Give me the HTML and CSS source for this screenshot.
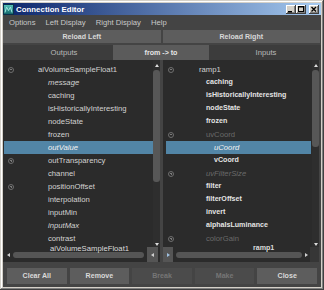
FILE: index.html
```html
<!DOCTYPE html>
<html>
<head>
<meta charset="utf-8">
<link rel="stylesheet" href="styles.css">
</head>
<body>
<div class="win">
  <div class="titlebar">
    <svg class="appicon" width="11" height="11" viewBox="0 0 11 11">
      <defs>
        <linearGradient id="ig" x1="0" y1="0" x2="0" y2="1">
          <stop offset="0" stop-color="#5cc7bd"/>
          <stop offset="1" stop-color="#0f6166"/>
        </linearGradient>
      </defs>
      <rect x="0.5" y="0.5" width="10" height="10" fill="url(#ig)" stroke="#0b2f4a"/>
      <path d="M2 8.5 L3.5 3 L5.5 6.5 L7.5 3 L9 8.5" fill="none" stroke="#9fe6df" stroke-width="1"/>
    </svg>
    <span class="title">Connection Editor</span>
    <div class="wbtns">
      <span class="wb"><svg width="10" height="9" viewBox="0 0 10 9"><rect x="2" y="6" width="4" height="1.5" fill="#000"/></svg></span>
      <span class="wb"><svg width="10" height="9" viewBox="0 0 10 9"><rect x="2.5" y="1.5" width="5" height="5" fill="none" stroke="#000"/><rect x="2" y="1" width="6" height="1.5" fill="#000"/></svg></span>
      <span class="wb wclose"><svg width="10" height="9" viewBox="0 0 10 9"><path d="M2.5 2 L7 6.5 M7 2 L2.5 6.5" stroke="#000" stroke-width="1.3"/></svg></span>
    </div>
  </div>
  <div class="content">
    <div class="menubar">
      <span>Options</span><span>Left Display</span><span>Right Display</span><span>Help</span>
    </div>
    <div class="reloads">
      <div class="rbtn">Reload Left</div>
      <div class="rbtn">Reload Right</div>
    </div>
    <div class="tabs">
      <div class="tab outs">Outputs</div>
      <div class="tab mid">from -&gt; to</div>
      <div class="tab ins">Inputs</div>
    </div>
    <div class="panels">
      <div class="panel left">
        <div class="tree">
          <ul class="rows">
            <li class="row"><i class="tog minus"></i><span class="lab l0">aiVolumeSampleFloat1</span></li>
            <li class="row"><i class="tog"></i><span class="lab l1 it">message</span></li>
            <li class="row"><i class="tog"></i><span class="lab l1">caching</span></li>
            <li class="row"><i class="tog"></i><span class="lab l1">isHistoricallyInteresting</span></li>
            <li class="row"><i class="tog"></i><span class="lab l1">nodeState</span></li>
            <li class="row"><i class="tog"></i><span class="lab l1">frozen</span></li>
            <li class="row sel"><i class="tog"></i><span class="lab l1 it">outValue</span></li>
            <li class="row"><i class="tog plus"></i><span class="lab l1">outTransparency</span></li>
            <li class="row"><i class="tog"></i><span class="lab l1">channel</span></li>
            <li class="row"><i class="tog plus"></i><span class="lab l1">positionOffset</span></li>
            <li class="row"><i class="tog"></i><span class="lab l1">interpolation</span></li>
            <li class="row"><i class="tog"></i><span class="lab l1">inputMin</span></li>
            <li class="row"><i class="tog"></i><span class="lab l1 it">inputMax</span></li>
            <li class="row"><i class="tog"></i><span class="lab l1">contrast</span></li>
          </ul>
          <div class="vscroll">
            <i class="up"></i>
            <div class="thumb" style="height:112px"></div>
            <div class="spacer"></div>
            <i class="down"></i>
          </div>
        </div>
        <div class="hbar">
          <i class="arr-l"></i>
          <div class="hthumb"></div>
          <div class="hbox"><i class="arr-l"></i></div>
        </div>
        <span class="nodelabel">aiVolumeSampleFloat1</span>
      </div>
      <div class="panel right">
        <div class="tree">
          <ul class="rows">
            <li class="row"><i class="tog minus"></i><span class="lab l0">ramp1</span></li>
            <li class="row"><i class="tog"></i><span class="lab l1 b">caching</span></li>
            <li class="row"><i class="tog"></i><span class="lab l1 b">isHistoricallyInteresting</span></li>
            <li class="row"><i class="tog"></i><span class="lab l1 b">nodeState</span></li>
            <li class="row"><i class="tog"></i><span class="lab l1 b">frozen</span></li>
            <li class="row"><i class="tog minus"></i><span class="lab l1 dim">uvCoord</span></li>
            <li class="row sel"><i class="tog"></i><span class="lab l2 it">uCoord</span></li>
            <li class="row"><i class="tog"></i><span class="lab l2 b">vCoord</span></li>
            <li class="row"><i class="tog plus"></i><span class="lab l1 dim it">uvFilterSize</span></li>
            <li class="row"><i class="tog"></i><span class="lab l1 b">filter</span></li>
            <li class="row"><i class="tog"></i><span class="lab l1 b">filterOffset</span></li>
            <li class="row"><i class="tog"></i><span class="lab l1 b">invert</span></li>
            <li class="row"><i class="tog"></i><span class="lab l1 b">alphaIsLuminance</span></li>
            <li class="row"><i class="tog plus"></i><span class="lab l1 dim">colorGain</span></li>
          </ul>
          <div class="vscroll">
            <i class="up"></i>
            <div class="thumb" style="height:77px"></div>
            <div class="spacer"></div>
            <i class="down"></i>
          </div>
        </div>
        <div class="hbar">
          <div class="hbox"><i class="arr-r blue"></i></div>
          <div class="hthumb"></div>
          <i class="arr-r"></i>
          <div class="corner"></div>
        </div>
        <span class="nodelabel b">ramp1</span>
      </div>
    </div>
    <div class="actions">
      <div class="abtn">Clear All</div>
      <div class="abtn">Remove</div>
      <div class="abtn off">Break</div>
      <div class="abtn off">Make</div>
      <div class="abtn">Close</div>
    </div>
  </div>
</div>
</body>
</html>
```
FILE: styles.css
```css
* { box-sizing: border-box; margin: 0; padding: 0; }
html, body { width: 324px; height: 290px; overflow: hidden; background: #d4d0c8; }
body { font-family: "Liberation Sans", Arial, sans-serif; }

.win {
  width: 324px; height: 290px; padding: 3px;
  background: #d4d0c8;
  display: flex; flex-direction: column;
  box-shadow: inset -1px -1px #404040, inset 1px 1px #d4d0c8, inset -2px -2px #808080, inset 2px 2px #fff;
}

.titlebar {
  height: 12px; flex: none;
  display: flex; align-items: center;
  background: linear-gradient(to right, #0a246a, #a6caf0);
  padding-right: 2px;
}
.appicon { flex: none; display: block; }
.title { color: #fff; font-weight: bold; font-size: 7.8px; margin-left: 2px; letter-spacing: 0.05px; }
.wbtns { margin-left: auto; display: flex; }
.wb {
  width: 10px; height: 9px; display: block;
  background: #d4d0c8;
  box-shadow: inset -1px -1px #404040, inset 1px 1px #fff, inset -2px -2px #808080;
}
.wb svg { display: block; }
.wclose { margin-left: 3px; }

.content { flex: 1; background: #444; display: flex; flex-direction: column; }

.menubar {
  height: 15px; flex: none;
  display: flex; align-items: center; gap: 10px;
  padding-left: 6px;
  font-size: 7.7px; color: #c8c8c8;
}

.reloads { height: 15px; flex: none; display: flex; gap: 2px; padding-right: 1px; align-items: flex-start; }
.rbtn {
  flex: 1; height: 13px;
  background: #5d5d5d; color: #d8d8d8;
  font-weight: bold; font-size: 7.1px;
  display: flex; align-items: center; justify-content: center;
}

.tabs { height: 15px; flex: none; display: grid; grid-template-columns: 110px 96px 1fr; }
.tab { display: flex; align-items: center; justify-content: center; font-size: 7.7px; color: #b8b8b8; background: #3c3c3c; }
.tab.outs { padding-left: 12px; }
.tab.mid { background: #5b5b5b; color: #e6e6e6; font-weight: bold; font-size: 7.1px; }
.tab.ins { padding-left: 2px; }

.panels { height: 202px; flex: none; display: flex; gap: 3px; padding-right: 2px; }
.panel { background: #2b2b2b; position: relative; display: flex; flex-direction: column; }
.panel.left { width: 157px; flex: none; }
.panel.right { flex: 1; }

.tree { height: 187px; flex: none; display: flex; overflow: hidden; }
.rows { flex: 1; list-style: none; padding-top: 3px; }
.left .rows { margin-left: 1px; }
.right .rows { margin-left: 3px; }

.row { height: 13px; display: flex; align-items: center; white-space: nowrap; font-size: 7.7px; color: #d2d2d2; }
.row.sel { background: #5285a6; color: #f2f2f2; }
.left .row { padding-left: 4px; }
.right .row { padding-left: 2px; }

.tog { width: 6px; height: 6px; flex: none; display: block; position: relative; }
.tog.minus, .tog.plus { border: 1px solid #6e6e6e; border-radius: 50%; }
.tog.minus::before, .tog.plus::before {
  content: ""; position: absolute; left: 1px; top: 1.5px; width: 2px; height: 1px; background: #7a7a7a;
}
.tog.plus::after {
  content: ""; position: absolute; left: 1.5px; top: 1px; width: 1px; height: 2px; background: #7a7a7a;
}

.lab { display: block; line-height: 13px; }
.left .l0 { margin-left: 24px; }
.left .l1 { margin-left: 34px; }
.right .l0 { margin-left: 25px; }
.right .l1 { margin-left: 32px; }
.right .l2 { margin-left: 40px; }
.it { font-style: italic; }
.b { font-weight: bold; font-size: 7.1px; color: #e4e4e4; }
.dim { color: #6a6a6a; }

.vscroll { width: 7px; flex: none; display: flex; flex-direction: column; align-items: center; background: #2e2e2e; }
.right .vscroll { margin-left: 1px; }
.up { display: block; width: 0; height: 0; margin-top: 4px; border-left: 2.5px solid transparent; border-right: 2.5px solid transparent; border-bottom: 3px solid #dcdcdc; }
.down { display: block; width: 0; height: 0; margin-bottom: 1px; border-left: 2.5px solid transparent; border-right: 2.5px solid transparent; border-top: 3px solid #dcdcdc; }
.thumb { width: 7px; margin-top: 3px; background: #575757; border-radius: 3px; }
.spacer { flex: 1; }

.hbar { height: 15px; flex: none; display: flex; align-items: center; }
.hthumb { height: 6px; background: #555; border-radius: 3px; }
.left .hbar { padding-left: 4px; }
.left .hthumb { width: 131px; margin-left: 3px; }
.left .hbox { margin-left: 3px; }
.right .hthumb { width: 126px; margin-left: 3px; margin-right: 3px; }
.hbox { width: 11px; height: 15px; background: #555; display: flex; align-items: center; justify-content: center; }
.right .hbox { width: 10px; }
.arr-l { display: block; width: 0; height: 0; border-top: 2.5px solid transparent; border-bottom: 2.5px solid transparent; border-right: 3px solid #d0d0d0; }
.arr-r { display: block; width: 0; height: 0; border-top: 2.5px solid transparent; border-bottom: 2.5px solid transparent; border-left: 3px solid #d0d0d0; }
.arr-r.blue { border-left-color: #9fc0e0; }
.corner { width: 9px; height: 15px; margin-left: auto; background: #363636; }

.nodelabel { position: absolute; top: 184px; font-size: 7.7px; color: #dcdcdc; line-height: 9px; white-space: nowrap; }
.left .nodelabel { left: 47px; }
.right .nodelabel { left: 90px; }
.nodelabel.b { font-size: 7.1px; }

.actions { height: 25px; flex: none; display: grid; grid-template-columns: repeat(5, 1fr); gap: 3px; padding: 6px 4px 3px 4px; }
.abtn {
  background: #5d5d5d; color: #dadada;
  font-weight: bold; font-size: 7.1px;
  display: flex; align-items: center; justify-content: center;
}
.abtn.off { background: #4b4b4b; color: #767676; }
```
